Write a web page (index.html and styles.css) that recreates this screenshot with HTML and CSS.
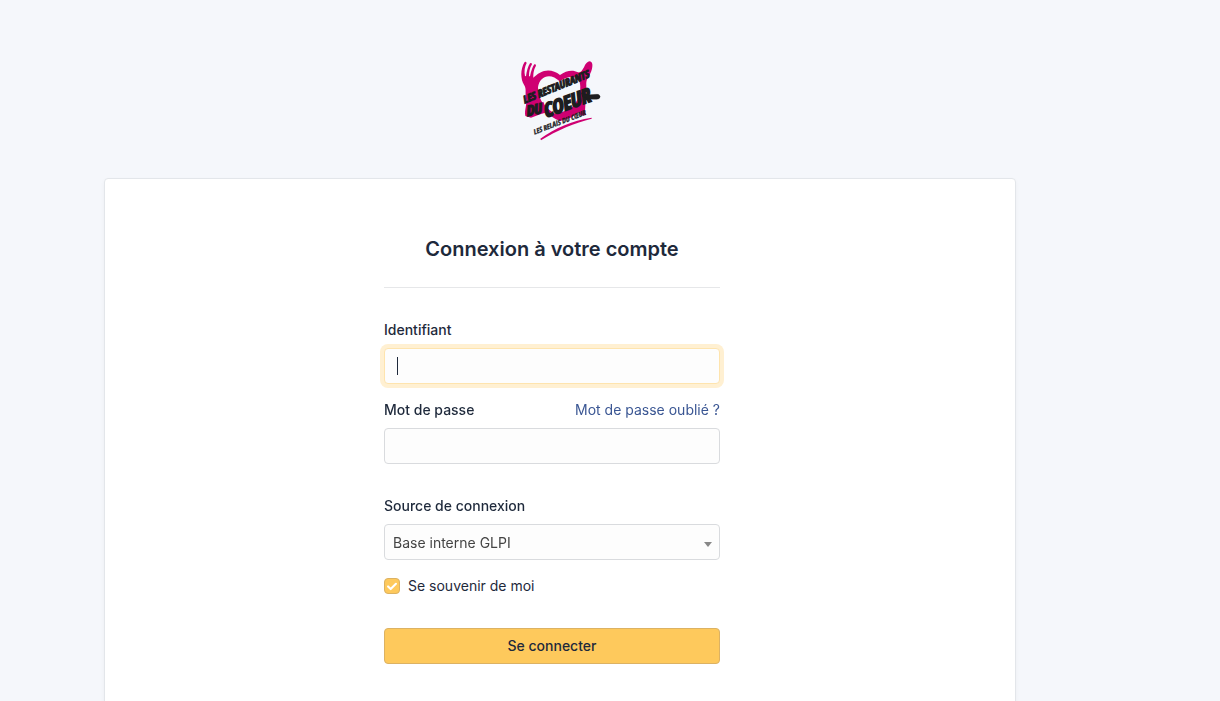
FILE: index.html
```html
<!DOCTYPE html>
<html lang="fr">
<head>
<meta charset="utf-8">
<meta name="viewport" content="width=device-width, initial-scale=1">
<title>Authentification - GLPI</title>
<link rel="stylesheet" href="styles.css">
</head>
<body>
<main class="page">
  <header class="brand">
    <svg class="logo" viewBox="0 0 300 300" role="img" aria-label="Les Restaurants du Cœur">
      <g class="logo-pink">
        <path d="M42 104C32 88 30 58 44 36Q48 34 50 39C44 50 42 64 45 78L48 79C50 63 54 49 60 40Q65 37 66 43C59 53 57 66 57 79L60 79C63 63 68 50 73 43Q78 42 78 47C70 61 70 72 70 83C75 78 82 72 90 68C110 57 133 61 150 75C168 62 188 58 204 67C212 69 216 62 222 52C227 38 237 30 244 36C252 44 244 68 235 82Q227 92 229 108L225 185L228 195L213 197L205 187C190 203 170 208 151 213C132 207 119 197 112 187L93 192L77 198L63 203L46 198C42 180 52 166 48 145C45 125 50 116 42 104Z"/>
        <path d="M91 266C135 234 185 212 245 203L245 206C195 219 141 240 93 271Z"/>
      </g>
      <path class="logo-paper" d="M84 112C88 78 122 66 149 94C168 80 190 76 206 88C222 124 198 179 151 197C108 184 84 150 84 112Z"/>
      <path class="logo-pink" d="M78 170L100 155L111 184L80 194ZM204 156L221 151L224 177L205 180C190 195 171 202 151 208L126 199L145 190L179 178Z"/>
      <g class="logo-ink">
        <text class="logo-line" transform="translate(43 161) rotate(-22)">LES RESTAURANTS</text>
        <text class="logo-du" transform="translate(50 199) rotate(-12)">DU</text>
        <text class="logo-name" transform="translate(106 204) rotate(-20)">COEUR</text>
        <path d="M214 128C235 141 253 130 267 134Q274 140 267 146C252 151 235 145 217 140Z"/>
        <text class="logo-sub" transform="translate(73 254) rotate(-21)">LES RELAIS DU CŒUR</text>
      </g>
    </svg>
  </header>
  <section class="card">
    <form class="login">
      <h1 class="title">Connexion à votre compte</h1>
      <div class="field">
        <label class="label" for="login">Identifiant</label>
        <div class="input-wrap">
          <input class="control control-login" id="login" type="text" autofocus>
          <span class="caret" aria-hidden="true"></span>
        </div>
      </div>
      <div class="field field-password">
        <div class="label-row">
          <label class="label" for="password">Mot de passe</label>
          <a class="link" href="#">Mot de passe oublié ?</a>
        </div>
        <input class="control" id="password" type="password">
      </div>
      <div class="field">
        <label class="label" for="source">Source de connexion</label>
        <div class="input-wrap">
          <select class="control select" id="source"><option>Base interne GLPI</option></select>
          <svg class="arrow" viewBox="0 0 8 5" aria-hidden="true"><path d="M0 0H8L4 5Z"/></svg>
        </div>
      </div>
      <label class="remember"><input class="check" type="checkbox" checked>Se souvenir de moi</label>
      <button class="submit" type="submit">Se connecter</button>
    </form>
  </section>
</main>
</body>
</html>
```
FILE: styles.css
```css
* { box-sizing: border-box; }
body {
  margin: 0;
  background: #f5f7fb;
  color: #1e293b;
  font: 14px/20px Inter, sans-serif;
}
.page {
  max-width: 1060px;
  min-height: 100vh;
  margin: 0 auto;
  padding: 60px 124px 0 24px;
  display: flex;
  flex-direction: column;
}
.brand { display: flex; justify-content: center; height: 118px; }
.logo { width: 100px; height: 100px; margin-top: -10px; }
.logo-pink { fill: #cf0072; }
.logo-paper { fill: #f5f7fb; }
.logo-ink {
  fill: #1d1d1f;
  stroke: #1d1d1f;
  font-family: "Liberation Sans Narrow", "Open Sans Condensed", "DejaVu Sans Condensed", sans-serif;
  font-weight: 700;
  font-style: italic;
}
.logo-line { font-size: 31px; stroke-width: 3px; }
.logo-du { font-size: 42px; stroke-width: 4px; }
.logo-name { font-size: 58px; stroke-width: 5px; }
.logo-sub { font-size: 21px; stroke-width: 1px; }
.card {
  flex: 1;
  padding: 56px 16px 56px 0;
  background: #fff;
  border: 1px solid #e3e6ea;
  border-radius: 4px;
  box-shadow: 0 2px 4px rgba(30, 41, 59, .04);
}
.login { width: 336px; max-width: 100%; margin: 0 auto; }
.title {
  margin: 0 0 32px;
  padding-bottom: 24px;
  border-bottom: 1px solid #e6e7e9;
  font-size: 20px;
  line-height: 28px;
  font-weight: 600;
  text-align: center;
}
.field { margin-bottom: 16px; }
.field-password { margin-bottom: 32px; }
.label { display: block; margin-bottom: 8px; font-weight: 500; }
.label-row { display: flex; justify-content: space-between; }
.link { color: #3a5693; text-decoration: none; }
.control {
  display: block;
  width: 100%;
  height: 36px;
  padding: 7px 12px;
  border: 1px solid #d9dbde;
  border-radius: 4px;
  background: #fdfdfd;
  color: #1e293b;
  font: inherit;
  outline: 0;
}
.control:focus { border-color: #fee4ae; box-shadow: 0 0 0 4px #fff0d2; }
.input-wrap { display: grid; align-items: center; }
.input-wrap > * { grid-area: 1 / 1; }
.control-login { caret-color: transparent; }
.caret { width: 1px; height: 18px; margin-left: 13px; background: #1e293b; pointer-events: none; visibility: hidden; }
.control-login:focus + .caret { visibility: visible; }
.select { appearance: none; padding: 8px 28px 6px 8px; color: #444; }
.arrow { width: 8px; height: 5px; margin: 4px 8px 0 0; justify-self: end; fill: #888; pointer-events: none; }
.remember { display: flex; align-items: center; gap: 8px; margin-bottom: 32px; }
.check {
  appearance: none;
  width: 16px;
  height: 16px;
  margin: 0;
  border: 1px solid #dcb263;
  border-radius: 4px;
  background: #fec95c;
}
.check:checked {
  background-image: url("data:image/svg+xml,%3Csvg xmlns='http://www.w3.org/2000/svg' viewBox='0 0 16 16'%3E%3Cpath fill='none' stroke='%23fff' stroke-width='2.4' stroke-linecap='round' stroke-linejoin='round' d='M3.5 8.5l3 3 6-6'/%3E%3C/svg%3E");
}
.submit {
  display: block;
  width: 100%;
  height: 36px;
  padding: 7px 16px;
  border: 1px solid #dcb263;
  border-radius: 4px;
  background: #fec95c;
  color: #1e293b;
  font: inherit;
  font-weight: 500;
}
```
